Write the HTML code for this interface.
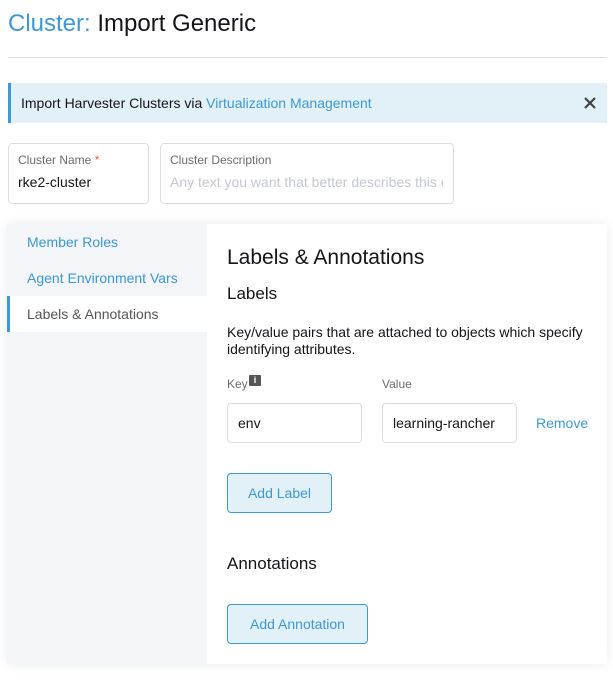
<!DOCTYPE html>
<html><head><style>
*{box-sizing:border-box;margin:0;padding:0}
body{width:613px;height:698px;background:#fff;font-family:"Liberation Sans",sans-serif;color:#141419;position:relative;overflow:hidden}
.a{position:absolute;white-space:nowrap}
.blue{color:#3d98d3}
.inp{position:absolute;border:1px solid #dcdee7;border-radius:4px;background:#fff}
.btn{position:absolute;border:1px solid #3d98d3;border-radius:4px;background:#e2f0f8;color:#3d98d3;font-size:14px;display:flex;align-items:center;justify-content:center}
</style></head><body>
<div class="a" style="left:8px;top:10px;font-size:24px"><span class="blue">Cluster:</span>&nbsp;Import Generic</div>
<div class="a" style="left:8px;top:57px;width:599px;height:1px;background:#dcdee7"></div>
<div class="a" style="left:8px;top:83px;width:599px;height:40px;background:#e2f0f8;border-left:3px solid #3d98d3"></div>
<div class="a" style="left:21px;top:95px;font-size:14px">Import Harvester Clusters via <span class="blue">Virtualization Management</span></div>
<svg class="a" style="left:584px;top:97px" width="12" height="12" viewBox="0 0 12 12"><path d="M1 1L11 11M11 1L1 11" stroke="#444" stroke-width="2.2"/></svg>
<div class="inp" style="left:8px;top:143px;width:141px;height:61px"></div>
<div class="a" style="left:18px;top:153px;font-size:12px;color:#6c6c76">Cluster Name <span style="color:#e25a5a">*</span></div>
<div class="a" style="left:18px;top:174px;font-size:14px">rke2-cluster</div>
<div class="inp" style="left:160px;top:143px;width:294px;height:61px"></div>
<div class="a" style="left:170px;top:153px;font-size:12px;color:#6c6c76">Cluster Description</div>
<div class="a" style="left:170px;top:174px;font-size:14px;color:#c5c7d3;width:273px;overflow:hidden">Any text you want that better describes this cluster</div>
<div class="a" style="left:7px;top:224px;width:600px;height:440px;background:#fff;box-shadow:0 0 12px rgba(0,0,40,0.08)"></div>
<div class="a" style="left:7px;top:224px;width:200px;height:440px;background:#f3f5f9"></div>
<div class="a blue" style="left:27px;top:234px;font-size:14px">Member Roles</div>
<div class="a blue" style="left:27px;top:270px;font-size:14px">Agent Environment Vars</div>
<div class="a" style="left:7px;top:296px;width:200px;height:36px;background:#fff;border-left:3px solid #3d98d3"></div>
<div class="a" style="left:27px;top:306px;font-size:14px;color:#555">Labels &amp; Annotations</div>
<div class="a" style="left:227px;top:246px;font-size:21px">Labels &amp; Annotations</div>
<div class="a" style="left:227px;top:284px;font-size:17px">Labels</div>
<div class="a" style="left:227px;top:324px;font-size:14px;line-height:17px">Key/value pairs that are attached to objects which specify<br>identifying attributes.</div>
<div class="a" style="left:227px;top:377px;font-size:12px;color:#6c6c76">Key</div>
<div class="a" style="left:249px;top:375px;width:12px;height:11px;background:#555;border-radius:1px;color:#fff;font-size:9px;font-weight:bold;text-align:center;line-height:11px">i</div>
<div class="a" style="left:382px;top:377px;font-size:12px;color:#6c6c76">Value</div>
<div class="inp" style="left:227px;top:403px;width:135px;height:40px"></div>
<div class="a" style="left:238px;top:415px;font-size:14px">env</div>
<div class="inp" style="left:382px;top:403px;width:135px;height:40px"></div>
<div class="a" style="left:393px;top:415px;font-size:14px">learning-rancher</div>
<div class="a blue" style="left:536px;top:415px;font-size:14px">Remove</div>
<div class="btn" style="left:227px;top:473px;width:105px;height:40px">Add Label</div>
<div class="a" style="left:227px;top:554px;font-size:17px">Annotations</div>
<div class="btn" style="left:227px;top:604px;width:141px;height:40px">Add Annotation</div>
</body></html>
